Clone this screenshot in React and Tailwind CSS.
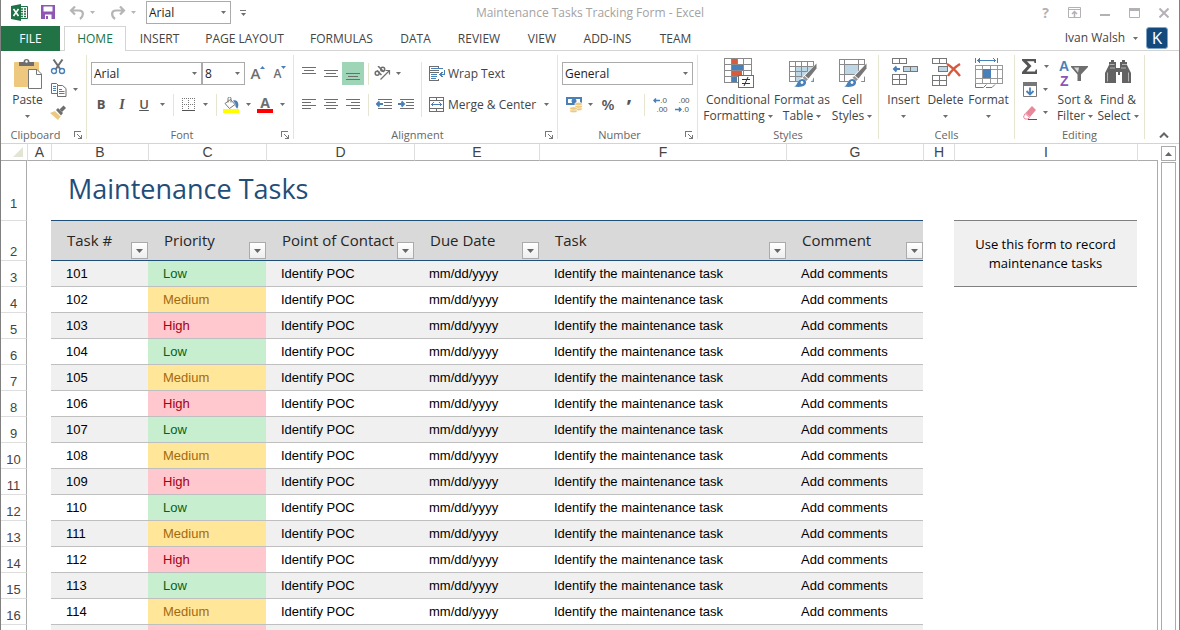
import React, { useState } from 'react';

const TABS = [
  { name: 'INSERT', width: 'w-[67px]' },
  { name: 'PAGE LAYOUT', width: 'w-[103px]' },
  { name: 'FORMULAS', width: 'w-[91px]' },
  { name: 'DATA', width: 'w-[57px]' },
  { name: 'REVIEW', width: 'w-[70px]' },
  { name: 'VIEW', width: 'w-[56px]' },
  { name: 'ADD-INS', width: 'w-[75px]' },
  { name: 'TEAM', width: 'w-[61px]' },
];

const COLUMNS = [
  { letter: 'A', width: 'w-[24px]' },
  { letter: 'B', width: 'w-[97px]' },
  { letter: 'C', width: 'w-[118px]' },
  { letter: 'D', width: 'w-[148px]' },
  { letter: 'E', width: 'w-[125px]' },
  { letter: 'F', width: 'w-[247px]' },
  { letter: 'G', width: 'w-[137px]' },
  { letter: 'H', width: 'w-[31px]' },
  { letter: 'I', width: 'w-[183px]' },
];

const FIELDS = ['Task #', 'Priority', 'Point of Contact', 'Due Date', 'Task', 'Comment'];

const PRIORITIES = ['Low', 'Medium', 'High'];

const PRIORITY_STYLES = {
  Low: 'bg-[#c6eecf] text-[#0b6110]',
  Medium: 'bg-[#ffe699] text-[#a5690f]',
  High: 'bg-[#ffc7ce] text-[#a50012]',
};

const TASKS = Array.from({ length: 15 }, (_, i) => ({
  id: 101 + i,
  priority: PRIORITIES[i % 3],
  contact: 'Identify POC',
  due: 'mm/dd/yyyy',
  task: 'Identify the maintenance task',
  comment: 'Add comments',
}));

/* ---------- Small shared pieces ---------- */

const Caret = ({ className = '' }) => (
  <svg viewBox="0 0 5 3" className={`w-[5px] h-[3px] shrink-0 ${className}`} aria-hidden="true">
    <path d="M0 0h5L2.500 3z" fill="#6e6e6e" />
  </svg>
);

const Separator = ({ className = 'h-[84px]' }) => (
  <div className={`w-px shrink-0 bg-[#e6e6d0] ${className}`} />
);

const Combo = ({ label, value, options, width }) => (
  <div className={`relative h-[23px] shrink-0 ${width}`}>
    <select
      aria-label={label}
      defaultValue={value}
      className="block w-full h-full appearance-none border border-[#ababab] bg-white pl-[2px] text-[12px] leading-5 text-[#1e1e1e]"
    >
      {options.map((o) => (
        <option key={o}>{o}</option>
      ))}
    </select>
    <Caret className="absolute right-[5px] top-[10px] pointer-events-none" />
  </div>
);

const Group = ({ title, width, launcher, children }) => (
  <>
    <section aria-label={title} className={`flex flex-col h-[88px] shrink-0 ${width}`}>
      <div className="h-[72px]">{children}</div>
      <div className="flex items-center h-4">
        <span className="flex-1 text-center text-[11px] leading-4 text-[#666]">{title}</span>
        {launcher && (
          <button aria-label={`${title} settings`} className="w-4 flex justify-center">
            <svg viewBox="0 0 8 8" className="w-2 h-2" fill="none" stroke="#777" shapeRendering="crispEdges">
              <path d="M.5 6V.5H7M3 3l4 4M7.500 4v3.500H4" />
            </svg>
          </button>
        )}
      </div>
    </section>
    <Separator />
  </>
);

const BigButton = ({ icon, lines, width }) => (
  <button className={`flex flex-col items-center pt-[3px] h-[72px] shrink-0 text-[12px] leading-4 text-[#444] whitespace-nowrap ${width}`}>
    {icon}
    <span className="mt-[2px]">{lines[0]}</span>
    <span className="flex items-center gap-[3px] h-4">
      {lines[1]}
      <Caret />
    </span>
  </button>
);

const IconButton = ({ label, width, children, className = '', ...rest }) => (
  <button aria-label={label} className={`flex items-center justify-center h-[23px] shrink-0 ${width} ${className}`} {...rest}>
    {children}
  </button>
);

/* ---------- Icons ---------- */

const PasteIcon = () => (
  <svg viewBox="0 0 30 32" className="w-[30px] h-8" fill="none">
    <rect x="1" y="4" width="25" height="25" rx="1" fill="#edc87e" />
    <path d="M6 8V4h4.500a3 3 0 0 1 6 0H21v4z" fill="#6e6e6e" />
    <circle cx="13.500" cy="3.500" r="1.200" fill="#fff" />
    <path d="M15.500 11.500h8.500l4.500 4.500v14.500h-13z" fill="#fff" stroke="#777" />
    <path d="M23.500 11.500v5h5" stroke="#777" />
  </svg>
);

const CutIcon = () => (
  <svg viewBox="0 0 16 16" className="w-4 h-4" fill="none">
    <path d="M3.500 0.500L10.500 10.500M12.500 0.500L5.500 10.500" stroke="#6e6e6e" strokeWidth="2" />
    <circle cx="4" cy="12" r="2.500" stroke="#4a80b9" strokeWidth="1.400" />
    <circle cx="12" cy="12" r="2.500" stroke="#4a80b9" strokeWidth="1.400" />
  </svg>
);

const CopyIcon = () => (
  <svg viewBox="0 0 16 16" className="w-4 h-4" fill="#fff">
    <path d="M.5 1.500h5l3 3v7h-8z" stroke="#6e6e6e" />
    <path d="M2 4.500h3M2 6.500h3M2 8.500h3" stroke="#4a80b9" />
    <path d="M6.500 3.500h5l3.500 3v8H6.500z" stroke="#6e6e6e" />
    <path d="M8 7.500h3M8 9.500h5.500M8 11.500h5.500" stroke="#4a80b9" />
  </svg>
);

const BrushIcon = () => (
  <svg viewBox="0 0 16 16" className="w-4 h-4">
    <path d="M0 8l5-2 6 5-3 4z" fill="#edc87e" />
    <path d="M6 5l2-2 5 5-2 2.500z" fill="#6e6e6e" />
    <path d="M9.500 4.500l4-4L16 3l-4 4z" fill="#6e6e6e" />
    <path d="M5.500 6L11 11.500" stroke="#fff" />
  </svg>
);

const BordersIcon = () => (
  <svg viewBox="0 0 13 13" className="w-[13px] h-[13px]" fill="none" stroke="#777" shapeRendering="crispEdges">
    <path d="M0 .5h13M0 6.500h13M.5 0v13M6.500 0v13M12.500 0v13" strokeDasharray="1 1" />
    <path d="M0 12.500h13" stroke="#555" />
  </svg>
);

const FillIcon = () => (
  <svg viewBox="0 0 16 16" className="w-4 h-4" fill="none">
    <path d="M2 6.500L7.500 2.500l4.500 5-5.500 4z" fill="#fff" stroke="#777" />
    <path d="M5 5.500V1.500a1.500 1.500 0 0 1 3 0v4" stroke="#777" />
    <path d="M10 3.500c5-1 6.500 3.500 4.500 8-2-1-2.500-3-2-4.500z" fill="#4a80b9" />
    <path d="M0 12h16v4H0z" fill="#ffff00" />
  </svg>
);

const LINE_PATHS = {
  top: 'M0 1.500h14M2 4.500h10M0 7.500h14',
  middle: 'M0 4.500h14M2 7.500h10M0 10.500h14',
  bottom: 'M0 7.500h14M2 10.500h10M0 13.500h14',
  left: 'M0 2.500h14M0 5.500h9M0 8.500h14M0 11.500h9',
  center: 'M0 2.500h14M2 5.500h10M0 8.500h14M2 11.500h10',
  right: 'M0 2.500h14M5 5.500h9M0 8.500h14M5 11.500h9',
};

const LinesIcon = ({ kind }) => (
  <svg viewBox="0 0 14 15" className="w-[14px] h-[15px]" stroke="#6e6e6e" shapeRendering="crispEdges">
    <path d={LINE_PATHS[kind]} />
  </svg>
);

const IndentIcon = ({ out }) => (
  <svg viewBox="0 0 16 12" className="w-4 h-3" fill="none" stroke="#6e6e6e">
    <path d="M2 .5h14M8 3.500h8M8 6.500h8M2 9.500h14" shapeRendering="crispEdges" />
    <path d={out ? 'M7 5H1M3.500 2.500L1 5l2.500 2.500' : 'M0 5h6M3.500 2.500L6 5 3.500 7.500'} stroke="#4a80b9" strokeWidth="2" />
  </svg>
);

const OrientationIcon = () => (
  <svg viewBox="0 0 17 15" className="w-[17px] h-[15px]" fill="none" stroke="#6e6e6e">
    <g strokeWidth="1.500">
      <circle cx="3.200" cy="7.300" r="2" />
      <path d="M3 4.500l4.500 4.500" />
      <path d="M4 0l6 6" />
      <circle cx="8.700" cy="3.200" r="2" />
    </g>
    <path d="M6.500 13.500l8.500-8.500M11.500 4.500h4v4" strokeWidth="1.200" />
  </svg>
);

const WrapIcon = () => (
  <svg viewBox="0 0 16 16" className="w-4 h-4" fill="none" shapeRendering="crispEdges">
    <path d="M9.500 2.500V.5h-9v4h9M.5 5v9.500h9v-2M.5 6.500h9" stroke="#6e6e6e" />
    <path d="M2 2.500h12M2 8.500h6M2 10.500h6M2 12.500h5" stroke="#4a80b9" />
    <path d="M15.500 4v4.500H11M13.500 6L11 8.500l2.500 2.500" stroke="#4a80b9" strokeWidth="1.500" />
  </svg>
);

const MergeIcon = () => (
  <svg viewBox="0 0 16 15" className="w-4 h-[15px]" fill="none" shapeRendering="crispEdges">
    <path d="M.5 .5h14v14H.5zM.5 3.500h14M.5 11.500h14M7.500 0v3M7.500 12v3" stroke="#6e6e6e" />
    <path d="M2.500 7.500h10M4.500 5.500l-2 2 2 2M10.500 5.500l2 2-2 2" stroke="#4a80b9" />
  </svg>
);

const CurrencyIcon = () => (
  <svg viewBox="0 0 17 16" className="w-[17px] h-4" fill="none">
    <path d="M0 0h16v8H0z" fill="#4a80b9" />
    <path d="M2 2h12v4H2z" fill="#fff" />
    <ellipse cx="8" cy="4" rx="2.500" ry="2.500" fill="#4a80b9" />
    <g fill="#edc87e" stroke="#fff" strokeWidth=".6">
      <ellipse cx="12.500" cy="12" rx="3.800" ry="1.700" />
      <ellipse cx="12.500" cy="9.500" rx="3.800" ry="1.700" />
      <ellipse cx="12.500" cy="7" rx="3.800" ry="1.700" />
      <ellipse cx="7.500" cy="14" rx="3.800" ry="1.700" />
      <ellipse cx="7.500" cy="11.500" rx="3.800" ry="1.700" />
    </g>
  </svg>
);

const DecimalArrow = ({ left }) => (
  <svg viewBox="0 0 7 5" className="w-[7px] h-[5px]" fill="none" stroke="#4a80b9">
    <path d={left ? 'M1 2.500h6M3 .5l-2 2 2 2' : 'M0 2.500h6M4 .5l2 2-2 2'} strokeWidth="1.500" />
  </svg>
);

const PaintBrush = () => (
  <>
    <path d="M29.500 5.500v5l-8 10-3.500-3z" fill="#777" />
    <path d="M17.500 18l3.500 3.200-2 2-3.500-3.700z" fill="#999" />
    <path d="M7 28.500c4-1 3-7 8-7.500 3.500 0 5.500 3.500 3 6-3 2.500-8 2-11 1.500z" fill="#4a80b9" />
    <circle cx="15" cy="24.500" r="1.400" fill="#fff" />
  </>
);

const ConditionalIcon = () => (
  <svg viewBox="-1 1 32 32" className="w-8 h-8" fill="none" shapeRendering="crispEdges">
    <path d="M9 2h6v5H9zM9 13h10v6H9z" fill="#d75b3c" />
    <path d="M9 7h11v6H9zM9 19h5v6H9z" fill="#4a80b9" />
    <path d="M1.500 1.500h27v24h-27zM1.500 7.500h27M1.500 13.500h27M1.500 19.500h27M8.500 1v24M14.500 1v6M20.500 1v24" stroke="#8a8a8a" />
    <path d="M15.500 18.500h15v12h-15z" fill="#fff" stroke="#6e6e6e" />
    <path d="M19 22.500h8M19 26.500h8" stroke="#333" />
    <path d="M25 20l-4 9" stroke="#333" shapeRendering="auto" />
  </svg>
);

const FormatTableIcon = () => (
  <svg viewBox="-1 0 32 32" className="w-8 h-8" fill="none">
    <path d="M8 9h18v15H8z" fill="#bdd7e6" />
    <path d="M2.500 3.500h24v20h-24zM2 8.500h25M2 13.500h25M2 18.500h25M8.500 3v21M14.500 3v21M20.500 3v21" stroke="#8a8a8a" shapeRendering="crispEdges" />
    <path d="M30 5L14 20l-6 8h13l9-13z" fill="#fff" />
    <PaintBrush />
  </svg>
);

const CellStylesIcon = () => (
  <svg viewBox="-1 0 32 32" className="w-8 h-8" fill="none">
    <path d="M8 7h13v9H8z" fill="#bdd7e6" />
    <path d="M2.500 1.500h25v22h-25zM2 6.500h26M2 16.500h26M7.500 1v23M21.500 1v23" stroke="#8a8a8a" shapeRendering="crispEdges" />
    <path d="M30 5L14 20l-6 8h13l9-13z" fill="#fff" />
    <PaintBrush />
  </svg>
);

const InsertCellsIcon = () => (
  <svg viewBox="0 0 32 32" className="w-8 h-8" fill="none" shapeRendering="crispEdges">
    <path d="M4.500 .5h14v5h-14zM11.500 0v6M4.500 16.500h14v10h-14zM11.500 16v11M4 21.500h15" stroke="#777" />
    <path d="M15.500 8.500h14v5h-14zM22.500 8v6" fill="#bdd7e6" stroke="#777" />
    <path d="M12 11H6M8.500 8.500L6 11l2.500 2.500" stroke="#4a80b9" strokeWidth="2" shapeRendering="auto" />
  </svg>
);

const DeleteCellsIcon = () => (
  <svg viewBox="0 0 32 32" className="w-8 h-8" fill="none" shapeRendering="crispEdges">
    <path d="M2.500 .5h14v5h-14zM9.500 0v6M2.500 17.500h14v10h-14zM9.500 17v11M2 22.500h15" stroke="#777" />
    <path d="M8.500 8.500h9v5h-9z" fill="#bdd7e6" stroke="#777" />
    <path d="M17 6c5 3 9 7 13 12M30 6c-5 3-9 7-12 12" stroke="#d9583b" strokeWidth="2.400" shapeRendering="auto" />
  </svg>
);

const FormatCellsIcon = () => (
  <svg viewBox="0 1 32 32" className="w-8 h-8" fill="none" shapeRendering="crispEdges">
    <path d="M2.500 1v5M24.500 1v5M4 3.500h19M7 1.500l-2 2 2 2M20.500 1.500l2 2-2 2" stroke="#4a80b9" />
    <path d="M2.500 8.500h27v18h-27zM2 12.500h28M2 21.500h28M9.500 8v19M17.500 8v19M24.500 8v19" stroke="#999" />
    <path d="M10 12h8v9h-8z" fill="#4a80b9" />
    <path d="M2.500 27v3.500h8l3-3M13 30.500h6l3-3" stroke="#777" shapeRendering="auto" />
  </svg>
);

const SumIcon = () => (
  <svg viewBox="0 0 16 15" className="w-4 h-[15px]" fill="#555">
    <path d="M0 0h14v4h-1.500L12 2.200H5L9.500 7l-5 5.500H13l.8-2h1.200V15H0v-2l5.500-6L0 1.500z" />
  </svg>
);

const FillDownIcon = () => (
  <svg viewBox="0 0 15 16" className="w-[15px] h-4" fill="none">
    <path d="M.5 .5h13v14H.5z" stroke="#777" />
    <path d="M0 0h14v4H0z" fill="#777" />
    <path d="M7 5.500v7M3.500 9L7 12.500 10.500 9" stroke="#4a80b9" strokeWidth="1.800" />
  </svg>
);

const EraserIcon = () => (
  <svg viewBox="0 0 15 14" className="w-[15px] h-[14px]">
    <path d="M9 0l4 4-6 7-4.500-4z" fill="#e8899b" />
    <path d="M2 7.500L6.500 11.500 5 13H2L.5 11z" fill="#fff" stroke="#e8899b" />
    <path d="M5 13.500h9" stroke="#555" />
  </svg>
);

const SortIcon = () => (
  <svg viewBox="0 0 32 32" className="w-8 h-8" fill="none">
    <text x="0" y="13" fontSize="14" fontWeight="700" fill="#4a80b9" fontFamily="Liberation Sans, sans-serif">A</text>
    <text x="1" y="28" fontSize="14" fontWeight="700" fill="#8a56b5" fontFamily="Liberation Sans, sans-serif">Z</text>
    <path d="M12 8h17v1l-7 7.500V23h-3.500v-6.500L12 9z" fill="#6e6e6e" />
    <path d="M15 9.500h5l-1 5z" fill="#d8d8d8" />
  </svg>
);

const FindIcon = () => (
  <svg viewBox="0 0 32 32" className="w-8 h-8" fill="#636363">
    <path d="M3 25V15l4-8V4h2V2h3v2h2v6h4V4h2V2h3v2h2v3l4 8v10h-9V14h-2v3h-2v-3h-2v11z" />
    <path d="M5.500 14.500v9M26.500 14.500v9M7.500 6.500h5M20 6.500h5M8 10h5M19 10h5" stroke="#c9c9c9" strokeWidth=".8" />
  </svg>
);

const ExcelLogo = () => (
  <svg viewBox="0 0 18 17" className="w-[18px] h-[17px] shrink-0" aria-hidden="true">
    <path d="M9 2.500h7.500v12H9z" fill="#fff" stroke="#1f7246" />
    <path d="M10 5h2M13 5h2M10 7.500h2M13 7.500h2M10 10h2M13 10h2M10 12.500h2M13 12.500h2" stroke="#1f7246" strokeWidth="1.400" />
    <path d="M0 2l10-2v17L0 15z" fill="#1f7246" />
    <path d="M2.500 5l5 7M7.500 5l-5 7" stroke="#fff" strokeWidth="1.600" />
  </svg>
);

const SaveIcon = () => (
  <svg viewBox="0 0 15 15" className="w-[15px] h-[15px]">
    <path d="M0 0h14v14H0z" fill="#8e57b3" />
    <path d="M2.500 1.500h9v5h-9zM4 9.500h6.500V14H4z" fill="#fff" />
    <path d="M5 11h2v3H5z" fill="#8e57b3" />
  </svg>
);

const UndoIcon = ({ flip }) => (
  <svg viewBox="0 0 16 14" className={`w-4 h-[14px] ${flip ? '-scale-x-100' : ''}`} fill="none" stroke="#b5b5b5" strokeWidth="2.200">
    <path d="M6 .5L2 4.500l4 4M2.500 4.500H10c5 0 5 5.500 1 8.500" />
  </svg>
);

/* ---------- Window top ---------- */

const TitleBar = () => (
  <header className="grid grid-cols-[1fr_auto_1fr] items-start h-[26px]">
    <div className="flex items-center h-[25px] pl-[10px]">
      <ExcelLogo />
      <button aria-label="Save" className="ml-3"><SaveIcon /></button>
      <button aria-label="Undo" className="ml-[13px]"><UndoIcon /></button>
      <Caret className="ml-[5px] opacity-50" />
      <button aria-label="Redo" className="ml-[15px]"><UndoIcon flip /></button>
      <Caret className="ml-[5px] mr-[10px] opacity-50" />
      <Combo label="Quick font" value="Arial" options={['Arial', 'Calibri']} width="w-[85px]" />
      <button aria-label="Customize toolbar" className="ml-[9px] flex flex-col items-center gap-[2px]">
        <span className="w-[6px] h-px bg-[#777]" />
        <Caret />
      </button>
    </div>
    <h1 className="text-[12px] leading-[26px] text-[#a3a3a3]">Maintenance Tasks Tracking Form - Excel</h1>
    <div className="flex items-center justify-end h-[25px] pr-[10px] gap-[19px] text-[#b5b0b5]">
      <button aria-label="Help" className="text-[14px] font-bold leading-4">?</button>
      <button aria-label="Ribbon display options">
        <svg viewBox="0 0 13 11" className="w-[13px] h-[11px]" fill="none" stroke="currentColor">
          <path d="M.5 .5h12v10H.5zM0 2.500h13" />
          <path d="M6.500 10V5M4 7l2.500-2.500L9 7" strokeWidth="1.500" />
        </svg>
      </button>
      <button aria-label="Minimize">
        <svg viewBox="0 0 10 10" className="w-[10px] h-[10px]"><path d="M0 6h10v2H0z" fill="currentColor" /></svg>
      </button>
      <button aria-label="Maximize">
        <svg viewBox="0 0 11 10" className="w-[11px] h-[10px]" fill="none" stroke="currentColor">
          <path d="M.5 .5h10v9H.5z" />
          <path d="M0 1.500h11" strokeWidth="3" />
        </svg>
      </button>
      <button aria-label="Close">
        <svg viewBox="0 0 10 10" className="w-[10px] h-[10px]" fill="none" stroke="currentColor" strokeWidth="2">
          <path d="M.5 .5l9 9M9.500 .5l-9 9" />
        </svg>
      </button>
    </div>
  </header>
);

const TabStrip = () => (
  <nav className="flex h-[25px] text-[12px] leading-6 text-[#444] whitespace-nowrap">
    <button className="w-[59px] shrink-0 bg-[#217346] text-white">FILE</button>
    <div className="w-1 shrink-0 border-b border-[#d4d4d4]" />
    <button className="w-[62px] shrink-0 border-x border-t border-[#d4d4d4] text-[#217346]">HOME</button>
    {TABS.map((tab) => (
      <button key={tab.name} className={`shrink-0 border-b border-[#d4d4d4] pt-px ${tab.width}`}>
        {tab.name}
      </button>
    ))}
    <div className="flex flex-1 items-center justify-end border-b border-[#d4d4d4] pr-[11px]">
      <button className="flex items-center gap-2">
        Ivan Walsh
        <Caret />
      </button>
      <div className="ml-2 w-[22px] h-[22px] rounded-[3px] border border-[#7fa3c4] bg-[#124a7e] text-center text-[17px] leading-5 text-white">
        K
      </div>
    </div>
  </nav>
);

/* ---------- Ribbon ---------- */

const Ribbon = () => {
  const [vAlign, setVAlign] = useState('bottom');

  return (
    <div className="flex h-[93px] pt-1 border-b border-[#d4d4d4]">
      <Group title="Clipboard" width="w-[85px]" launcher>
        <div className="flex">
          <BigButton icon={<PasteIcon />} lines={['Paste', '']} width="w-[49px] pl-[4px]" />
          <div className="flex flex-col">
            <IconButton label="Cut" width="w-4"><CutIcon /></IconButton>
            <IconButton label="Copy" width="w-[28px]" className="gap-[6px]"><CopyIcon /><Caret /></IconButton>
            <IconButton label="Format Painter" width="w-4"><BrushIcon /></IconButton>
          </div>
        </div>
      </Group>

      <Group title="Font" width="w-[206px]" launcher>
        <div className="flex flex-col gap-2 pt-[7px] pl-1">
          <div className="flex items-center">
            <Combo label="Font" value="Arial" options={['Arial', 'Calibri', 'Verdana']} width="w-[111px]" />
            <Combo label="Font size" value="8" options={['8', '9', '10', '11', '12']} width="w-[43px]" />
            <IconButton label="Increase font size" width="w-[24px]" className="text-[15px] font-semibold text-[#6e6e6e] pl-[2px]">
              A
              <svg viewBox="0 0 5 3" className="w-[5px] h-[3px] mb-3"><path d="M0 3h5L2.500 0z" fill="#4a80b9" /></svg>
            </IconButton>
            <IconButton label="Decrease font size" width="w-[22px]" className="text-[12px] font-semibold text-[#6e6e6e]">
              A
              <svg viewBox="0 0 5 3" className="w-[5px] h-[3px] mb-3"><path d="M0 0h5L2.500 3z" fill="#4a80b9" /></svg>
            </IconButton>
          </div>
          <div className="flex items-center text-[13px] text-[#555]">
            <IconButton label="Bold" width="w-[20px]" className="font-bold">B</IconButton>
            <IconButton label="Italic" width="w-[22px]" className="font-semibold italic font-['Liberation_Serif',serif] text-[14px]">I</IconButton>
            <IconButton label="Underline" width="w-[22px]" className="font-semibold underline">U</IconButton>
            <IconButton label="Underline style" width="w-[14px]"><Caret /></IconButton>
            <Separator className="h-[22px] mx-1" />
            <IconButton label="Borders" width="w-[20px]"><BordersIcon /></IconButton>
            <IconButton label="Border style" width="w-[14px]"><Caret /></IconButton>
            <Separator className="h-[22px] mx-1" />
            <IconButton label="Fill color" width="w-[20px]"><FillIcon /></IconButton>
            <IconButton label="Fill color choices" width="w-[14px]"><Caret /></IconButton>
            <IconButton label="Font color" width="w-[20px]" className="flex-col">
              <span className="h-3 text-[14px] leading-3 font-bold text-[#6e6e6e]">A</span>
              <span className="w-4 h-1 bg-[#ff0000]" />
            </IconButton>
            <IconButton label="Font color choices" width="w-[14px]"><Caret /></IconButton>
          </div>
        </div>
      </Group>

      <Group title="Alignment" width="w-[263px]" launcher>
        <div className="flex pl-1 pt-[7px]">
          <div className="flex flex-col gap-2">
            <div className="flex items-center">
              {['top', 'middle', 'bottom'].map((kind) => (
                <IconButton
                  key={kind}
                  label={`Align ${kind}`}
                  width="w-[22px]"
                  className={vAlign === kind ? 'bg-[#9fd5b7]' : ''}
                  onClick={() => setVAlign(kind)}
                >
                  <LinesIcon kind={kind} />
                </IconButton>
              ))}
              <Separator className="h-[22px] mx-1" />
              <IconButton label="Orientation" width="w-[28px]" className="gap-[5px]"><OrientationIcon /><Caret /></IconButton>
            </div>
            <div className="flex items-center">
              {['left', 'center', 'right'].map((kind) => (
                <IconButton key={kind} label={`Align ${kind}`} width="w-[22px]"><LinesIcon kind={kind} /></IconButton>
              ))}
              <Separator className="h-[22px] mx-1" />
              <IconButton label="Decrease indent" width="w-[22px]"><IndentIcon out /></IconButton>
              <IconButton label="Increase indent" width="w-[22px]"><IndentIcon /></IconButton>
            </div>
          </div>
          <Separator className="h-[55px] ml-1 mr-[7px]" />
          <div className="flex flex-col gap-2 text-[12px] text-[#444]">
            <button className="flex items-center gap-[3px] h-[23px]"><WrapIcon />Wrap Text</button>
            <button className="flex items-center gap-[3px] h-[23px] whitespace-nowrap"><MergeIcon />Merge &amp; Center<Caret className="ml-[5px]" /></button>
          </div>
        </div>
      </Group>

      <Group title="Number" width="w-[139px]" launcher>
        <div className="flex flex-col gap-2 pt-[7px] pl-1">
          <Combo label="Number format" value="General" options={['General', 'Number', 'Currency']} width="w-[131px]" />
          <div className="flex items-center text-[#555]">
            <IconButton label="Accounting format" width="w-[34px]" className="gap-[5px]"><CurrencyIcon /><Caret /></IconButton>
            <IconButton label="Percent style" width="w-[24px]" className="text-[15px] font-semibold">%</IconButton>
            <IconButton label="Comma style" width="w-[18px]" className="pt-[5px] text-[20px] leading-5 font-bold">’</IconButton>
            <Separator className="h-[22px] ml-[6px] mr-1" />
            <IconButton label="Increase decimal" width="w-[22px]" className="flex-col font-['Liberation_Sans',Arial,sans-serif] text-[8px] leading-[9px]">
              <span className="flex items-center h-[9px]"><DecimalArrow left />.0</span>
              <span className="h-[9px] pl-1">.00</span>
            </IconButton>
            <IconButton label="Decrease decimal" width="w-[22px]" className="flex-col font-['Liberation_Sans',Arial,sans-serif] text-[8px] leading-[9px]">
              <span className="h-[9px] pl-1">.00</span>
              <span className="flex items-center h-[9px]"><DecimalArrow />.0</span>
            </IconButton>
          </div>
        </div>
      </Group>

      <Group title="Styles" width="w-[180px]">
        <div className="flex pl-1">
          <BigButton icon={<ConditionalIcon />} lines={['Conditional', 'Formatting']} width="w-[72px]" />
          <BigButton icon={<FormatTableIcon />} lines={['Format as', 'Table']} width="w-[56px]" />
          <BigButton icon={<CellStylesIcon />} lines={['Cell', 'Styles']} width="w-[44px]" />
        </div>
      </Group>

      <Group title="Cells" width="w-[135px]">
        <div className="flex pl-1">
          <BigButton icon={<InsertCellsIcon />} lines={['Insert', '']} width="w-[41px]" />
          <BigButton icon={<DeleteCellsIcon />} lines={['Delete', '']} width="w-[43px]" />
          <BigButton icon={<FormatCellsIcon />} lines={['Format', '']} width="w-[43px]" />
        </div>
      </Group>

      <Group title="Editing" width="w-[129px]">
        <div className="flex pl-1">
          <div className="flex flex-col w-[34px]">
            <IconButton label="AutoSum" width="w-[32px]" className="gap-[6px]"><SumIcon /><Caret /></IconButton>
            <IconButton label="Fill" width="w-[32px]" className="gap-[5px]"><FillDownIcon /><Caret /></IconButton>
            <IconButton label="Clear" width="w-[32px]" className="gap-[5px]"><EraserIcon /><Caret /></IconButton>
          </div>
          <BigButton icon={<SortIcon />} lines={['Sort &', 'Filter']} width="w-[44px]" />
          <BigButton icon={<FindIcon />} lines={['Find &', 'Select']} width="w-[42px]" />
        </div>
      </Group>

      <div className="flex flex-1 items-end justify-end pr-[10px] pb-[5px]">
        <button aria-label="Collapse ribbon">
          <svg viewBox="0 0 10 6" className="w-[10px] h-[6px]" fill="none" stroke="#666" strokeWidth="2">
            <path d="M1 5.500l4-4 4 4" />
          </svg>
        </button>
      </div>
    </div>
  );
};

/* ---------- Worksheet ---------- */

const RowNumber = ({ n, className = 'pb-0' }) => (
  <th scope="row" className={`border-r border-b border-r-[#ababab] border-b-[#dedede] px-0 pt-0 align-bottom text-center text-[13px] leading-4 font-normal text-[#444] ${className}`}>
    {n}
  </th>
);

const DataCell = ({ children, className }) => (
  <td className={`h-[26px] border-b border-[#bfbfbf] py-0 pl-[15px] pr-0 ${className}`}>{children}</td>
);

const Sheet = () => (
  <table className="w-full table-fixed border-separate border-spacing-0 font-['Liberation_Sans',Arial,sans-serif] text-[13px] leading-4 text-black whitespace-nowrap">
    <thead>
      <tr className="text-[14px] text-[#444]">
        <th aria-label="Select all" className="w-[26px] h-[17px] border-b border-[#ababab] p-0">
          <svg viewBox="0 0 10 10" className="w-[10px] h-[10px] ml-3"><path d="M10 0v10H0z" fill="#e4e4d4" /></svg>
        </th>
        {COLUMNS.map((col) => (
          <th key={col.letter} scope="col" className={`h-[17px] border-l border-b border-l-[#dedede] border-b-[#ababab] p-0 font-normal ${col.width}`}>
            {col.letter}
          </th>
        ))}
        <th className="border-l border-b border-l-[#dedede] border-b-[#ababab] p-0" />
      </tr>
    </thead>
    <tbody>
      <tr>
        <RowNumber n={1} className="pb-2" />
        <td />
        <td colSpan={6} className="h-[60px] border-b border-[#1f4e79] pt-0 pb-1 pl-[17px] font-['Open_Sans','Noto_Sans',sans-serif] text-[27px] leading-[54px] text-[#1f4e79]">
          Maintenance Tasks
        </td>
        <td />
        <td className="border-b border-[#808080]" />
        <td className="border-r border-[#ababab]" />
      </tr>
      <tr>
        <RowNumber n={2} />
        <td />
        {FIELDS.map((field) => (
          <td key={field} className="h-[40px] border-b border-[#1f4e79] bg-[#d9d9d9] p-0 font-['Open_Sans','Noto_Sans',sans-serif] text-[15px] text-[#262626]">
            <div className="flex items-end h-[39px] pl-4 pb-px">
              <span className="flex-1 w-0 self-center">{field}</span>
              <button aria-label={`Filter ${field}`} className="flex shrink-0 items-center justify-center w-[17px] h-[17px] border border-[#ababab] bg-linear-to-b from-white to-[#eeeeee]">
                <svg viewBox="0 0 7 4" className="w-[7px] h-1"><path d="M0 0h7L3.500 4z" fill="#666" /></svg>
              </button>
            </div>
          </td>
        ))}
        <td />
        <td rowSpan={2} className="border-b border-[#808080] bg-[#f0f0f0] p-0 text-center font-['Open_Sans','Noto_Sans',sans-serif] leading-[19px] whitespace-normal">
          Use this form to record
          <br />
          maintenance tasks
        </td>
        <td className="border-r border-[#ababab]" />
      </tr>
      {TASKS.map((task, i) => {
        const stripe = i % 2 === 0 ? 'bg-[#f0f0f0]' : 'bg-white';
        return (
          <tr key={task.id}>
            <RowNumber n={i + 3} />
            <td />
            <DataCell className={stripe}>{task.id}</DataCell>
            <DataCell className={PRIORITY_STYLES[task.priority]}>{task.priority}</DataCell>
            <DataCell className={stripe}>{task.contact}</DataCell>
            <DataCell className={stripe}>{task.due}</DataCell>
            <DataCell className={stripe}>{task.task}</DataCell>
            <DataCell className={stripe}>{task.comment}</DataCell>
            <td />
            {i > 0 && <td />}
            <td className="border-r border-[#ababab]" />
          </tr>
        );
      })}
    </tbody>
  </table>
);

const ScrollBar = () => (
  <div className="flex flex-col gap-px w-[15px] shrink-0 mx-[3px] pt-[2px]">
    <button aria-label="Scroll up" className="flex items-center justify-center h-[15px] shrink-0 border border-[#ababab]">
      <svg viewBox="0 0 7 4" className="w-[7px] h-1"><path d="M0 4h7L3.500 0z" fill="#666" /></svg>
    </button>
    <div className="flex-1 border-x border-t border-[#ababab]" />
  </div>
);

export default function App() {
  return (
    <div className="flex flex-col h-screen overflow-hidden border-x border-[#808080] bg-white font-['Open_Sans','Noto_Sans',sans-serif]">
      <TitleBar />
      <TabStrip />
      <Ribbon />
      <main className="flex flex-1 min-h-0">
        <div className="flex-1 min-w-0 overflow-hidden">
          <Sheet />
        </div>
        <ScrollBar />
      </main>
    </div>
  );
}
